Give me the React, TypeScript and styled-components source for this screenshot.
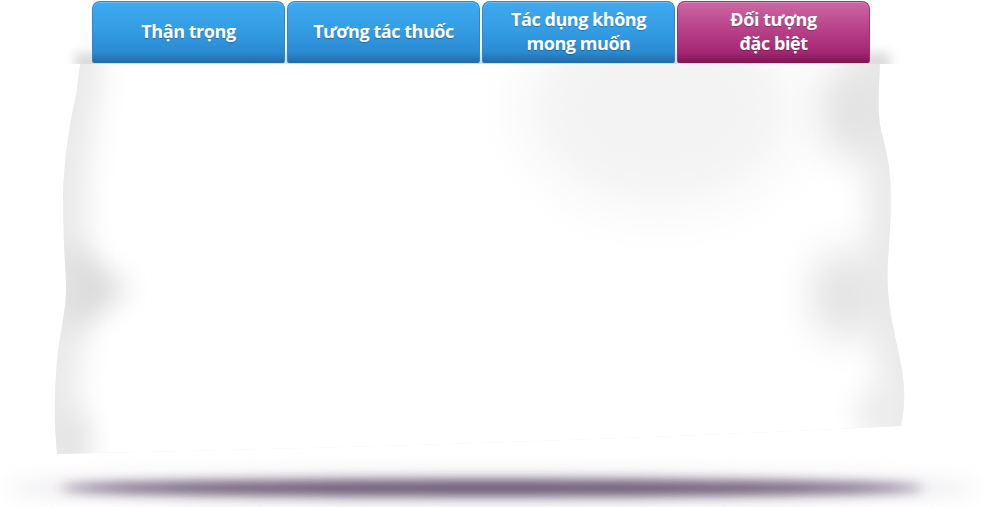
import React from "react";
import styled, { createGlobalStyle } from "styled-components";

const Global = createGlobalStyle`
  html, body { margin: 0; padding: 0; background: #ffffff; }
  body { font-family: "Open Sans", "Liberation Sans", sans-serif; }
`;

const Stage = styled.div`
  position: relative;
  width: 987px;
  height: 507px;
  overflow: hidden;
  background: #ffffff;
`;

const Backdrop = styled.svg`
  position: absolute;
  inset: 0;
  z-index: 0;
`;

const TabRow = styled.nav`
  position: relative;
  z-index: 1;
  display: flex;
  gap: 2px;
  padding: 1px 0 0 92px;
`;

type Tone = "blue" | "pink";

const palette: Record<Tone, { top: string; mid: string; low: string; base: string; border: string }> = {
  blue: { top: "#3eaaf0", mid: "#349de4", low: "#2a8bd2", base: "#1f6aa8", border: "#2f87c9" },
  pink: { top: "#cc67a2", mid: "#b8418a", low: "#a32872", base: "#7f1452", border: "#a5306f" },
};

const Tab = styled.button<{ $tone: Tone }>`
  width: 193px;
  height: 62px;
  box-sizing: border-box;
  margin: 0;
  padding: 0 6px 4px;
  border: 1px solid ${(p) => palette[p.$tone].border};
  border-bottom: none;
  border-radius: 8px 8px 2px 2px;
  background: linear-gradient(
    to bottom,
    ${(p) => palette[p.$tone].top} 0%,
    ${(p) => palette[p.$tone].mid} 45%,
    ${(p) => palette[p.$tone].low} 82%,
    ${(p) => palette[p.$tone].base} 100%
  );
  box-shadow: inset 0 1px 0 rgba(255, 255, 255, 0.25);
  color: #ffffff;
  font-family: "Open Sans", "Liberation Sans", sans-serif;
  font-weight: 700;
  font-size: 18px;
  line-height: 24px;
  letter-spacing: -0.45px;
  text-shadow: 0 1px 1px rgba(0, 0, 0, 0.25);
  display: flex;
  align-items: center;
  justify-content: center;
  text-align: center;
  cursor: pointer;
`;

const tabs: { label: string[]; tone: Tone }[] = [
  { label: ["Thận trọng"], tone: "blue" },
  { label: ["Tương tác thuốc"], tone: "blue" },
  { label: ["Tác dụng không", "mong muốn"], tone: "blue" },
  { label: ["Đối tượng", "đặc biệt"], tone: "pink" },
];

const paperPath =
  "M80 64 L880 64 C879 90 877 110 881 130 C886 150 891 165 891 200 C891 240 886 260 888 290 C890 320 897 340 902 370 C906 395 904 410 901 426 C620 440 330 448 57 454 C54 420 54 395 57 360 C60 330 67 310 66 280 C64 250 63 225 63 195 C64 160 70 120 76 95 Z";

const innerPath =
  "M104 30 L856 30 C855 90 853 110 857 130 C862 150 867 165 867 200 C867 240 862 260 864 290 C866 320 873 340 878 370 C882 395 880 410 877 420 L877 520 L81 520 C78 420 78 395 81 360 C84 330 91 310 90 280 C88 250 87 225 87 195 C88 160 94 120 100 95 Z";

export default function App() {
  return (
    <>
      <Global />
      <Stage>
        <Backdrop width="987" height="507" viewBox="0 0 987 507">
          <defs>
            <clipPath id="paperClip">
              <path d={paperPath} />
            </clipPath>
            <clipPath id="aboveClip">
              <rect x="0" y="0" width="987" height="64" />
            </clipPath>
            <filter id="soft6" x="-20%" y="-200%" width="140%" height="500%">
              <feGaussianBlur stdDeviation="6" />
            </filter>
            <filter id="soft10" x="-20%" y="-200%" width="140%" height="500%">
              <feGaussianBlur stdDeviation="10" />
            </filter>
            <filter id="soft14" x="-50%" y="-50%" width="200%" height="200%">
              <feGaussianBlur stdDeviation="14" />
            </filter>
            <filter id="soft20" x="-50%" y="-50%" width="200%" height="200%">
              <feGaussianBlur stdDeviation="20" />
            </filter>
            <filter id="soft28" x="-50%" y="-50%" width="200%" height="200%">
              <feGaussianBlur stdDeviation="28" />
            </filter>
          </defs>

          <g clipPath="url(#aboveClip)">
            <rect x="75" y="53" width="815" height="18" fill="#d8d8d8" filter="url(#soft6)" />
          </g>

          <g clipPath="url(#paperClip)">
            <rect x="0" y="60" width="987" height="420" fill="#eaeaea" />
            <path d={innerPath} fill="#ffffff" filter="url(#soft14)" />
            <ellipse cx="660" cy="108" rx="135" ry="100" fill="#f3f3f3" filter="url(#soft28)" />
            <path d="M66 240 L130 290 L66 335 Z" fill="#dadada" filter="url(#soft14)" />
            <ellipse cx="852" cy="110" rx="30" ry="50" fill="#e0e0e0" filter="url(#soft20)" />
            <ellipse cx="845" cy="295" rx="32" ry="44" fill="#e0e0e0" filter="url(#soft20)" />
            <ellipse cx="70" cy="440" rx="20" ry="30" fill="#e4e4e4" filter="url(#soft14)" />
            <ellipse cx="880" cy="412" rx="24" ry="24" fill="#ececec" filter="url(#soft14)" />
          </g>

          <ellipse cx="492" cy="488" rx="485" ry="14" fill="#d6d0d9" opacity="0.55" filter="url(#soft10)" />
          <ellipse cx="492" cy="488" rx="432" ry="8" fill="#5e4d6a" opacity="0.95" filter="url(#soft6)" />
        </Backdrop>

        <TabRow>
          {tabs.map((t) => (
            <Tab key={t.label.join(" ")} $tone={t.tone}>
              <span>
                {t.label.map((line, i) => (
                  <React.Fragment key={line}>
                    {i > 0 && <br />}
                    {line}
                  </React.Fragment>
                ))}
              </span>
            </Tab>
          ))}
        </TabRow>
      </Stage>
    </>
  );
}
